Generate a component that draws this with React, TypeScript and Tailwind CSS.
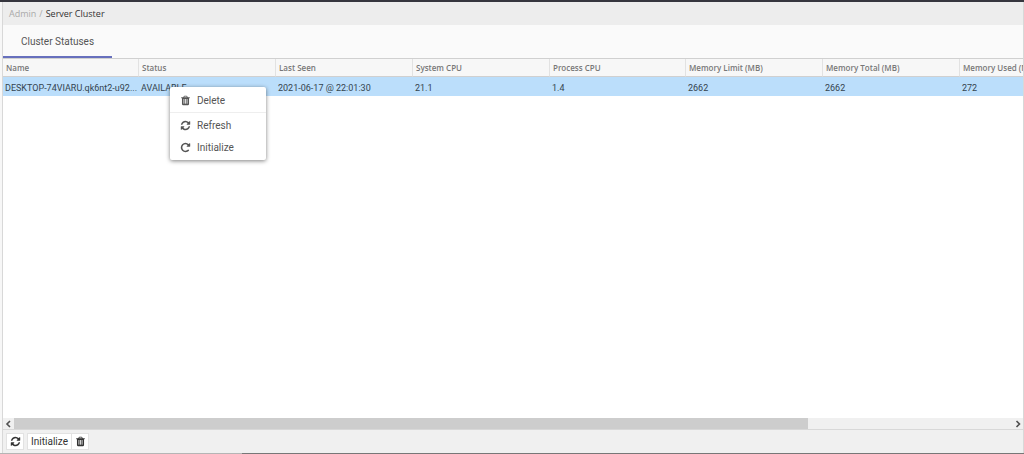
import React from "react";

const icons = {
  trash:
    "M704 1376v-704q0-14-9-23t-23-9h-64q-14 0-23 9t-9 23v704q0 14 9 23t23 9h64q14 0 23-9t9-23zm256 0v-704q0-14-9-23t-23-9h-64q-14 0-23 9t-9 23v704q0 14 9 23t23 9h64q14 0 23-9t9-23zm256 0v-704q0-14-9-23t-23-9h-64q-14 0-23 9t-9 23v704q0 14 9 23t23 9h64q14 0 23-9t9-23zm-544-992h448l-48-117q-7-9-17-11h-317q-10 2-17 11zm928 32v64q0 14-9 23t-23 9h-96v948q0 83-47 143.5t-113 60.5h-832q-66 0-113-58.5t-47-141.5v-952h-96q-14 0-23-9t-9-23v-64q0-14 9-23t23-9h309l70-167q15-37 54-63t79-26h320q40 0 79 26t54 63l70 167h309q14 0 23 9t9 23z",
  refresh:
    "M1639 1056q0 5-1 7-64 268-268 434.5t-478 166.5q-146 0-282.5-55t-243.5-157l-129 129q-19 19-45 19t-45-19-19-45v-448q0-26 19-45t45-19h448q26 0 45 19t19 45-19 45l-137 137q71 66 161 102t187 36q134 0 250-65t186-179q11-17 53-117 8-23 30-23h192q13 0 22.5 9.5t9.5 22.5zm25-800v448q0 26-19 45t-45 19h-448q-26 0-45-19t-19-45 19-45l138-138q-148-137-349-137-134 0-250 65t-186 179q-11 17-53 117-8 23-30 23h-199q-13 0-22.5-9.5t-9.5-22.5v-7q65-268 270-434.5t480-166.5q146 0 284 55.5t245 156.5l130-129q19-19 45-19t45 19 19 45z",
  repeat:
    "M1664 256v448q0 26-19 45t-45 19h-448q-42 0-59-40-17-39 14-69l138-138q-148-137-349-137-104 0-198.5 40.5t-163.5 109.5-109.5 163.5-40.5 198.5 40.5 198.5 109.5 163.5 163.5 109.5 198.5 40.5q119 0 225-52t179-147q7-10 23-12 15 0 25 9l137 138q9 8 9.5 20.5t-7.5 22.5q-109 132-264 204.5t-327 72.5q-156 0-298-61t-245-164-164-245-61-298 61-298 164-245 245-164 298-61q147 0 284.5 55.5t244.5 156.5l130-129q29-31 70-14 39 17 39 59z",
};

function Icon({ name }: { name: keyof typeof icons }) {
  return (
    <svg viewBox="0 0 1792 1792" className="size-[11px] shrink-0" fill="currentColor" aria-hidden="true">
      <path d={icons[name]} />
    </svg>
  );
}

const columns = [
  { label: "Name", value: "DESKTOP-74VIARU.qk6nt2-u92...", width: "w-[136px]" },
  { label: "Status", value: "AVAILABLE", width: "w-[137px]" },
  { label: "Last Seen", value: "2021-06-17 @ 22:01:30", width: "w-[137px]" },
  { label: "System CPU", value: "21.1", width: "w-[137px]" },
  { label: "Process CPU", value: "1.4", width: "w-[136px]" },
  { label: "Memory Limit (MB)", value: "2662", width: "w-[137px]" },
  { label: "Memory Total (MB)", value: "2662", width: "w-[137px]" },
  { label: "Memory Used (MB)", value: "272", width: "w-[137px]" },
];

function ClusterTable() {
  return (
    <table className="w-[1094px] table-fixed border-separate border-spacing-0 text-left">
      <thead>
        <tr className="h-[18px] bg-[#f7f7f7] font-['Open_Sans',sans-serif] text-[8px] leading-3 text-[#777]">
          {columns.map((c) => (
            <th key={c.label} scope="col" className={`${c.width} border-r border-b border-r-[#e2e2e2] border-b-[#d0d0d0] px-[3px] py-0 font-semibold whitespace-nowrap`}>
              {c.label}
            </th>
          ))}
        </tr>
      </thead>
      <tbody>
        <tr className="h-[19px] bg-[#bbdefb] font-[Roboto,sans-serif] text-[9px] leading-3 text-[#34444f]">
          {columns.map((c) => (
            <td key={c.label} className="px-0.5 pt-[3px] pb-0 whitespace-nowrap">
              {c.value}
            </td>
          ))}
        </tr>
      </tbody>
    </table>
  );
}

function ContextMenu() {
  const item = "flex h-[22px] w-full items-center gap-1.5 px-2.5 hover:bg-gray-100";
  return (
    <div role="menu" className="absolute top-[85px] left-[170px] w-24 rounded-xs bg-white py-0.5 font-[Roboto,sans-serif] text-[10px] text-[#555] shadow-[0_1px_4px_rgba(0,0,0,0.5)]">
      <button role="menuitem" className={item}>
        <Icon name="trash" />
        Delete
      </button>
      <hr className="my-px border-[#eee]" />
      <button role="menuitem" className={item}>
        <Icon name="refresh" />
        Refresh
      </button>
      <button role="menuitem" className={item}>
        <Icon name="repeat" />
        Initialize
      </button>
    </div>
  );
}

function Chevron({ d }: { d: string }) {
  return (
    <svg viewBox="0 0 8 8" className="size-2" fill="none" stroke="#505050" strokeWidth="1.6" aria-hidden="true">
      <path d={d} />
    </svg>
  );
}

function HorizontalScroll() {
  return (
    <div className="flex h-3 shrink-0 border-b border-[#d8d8d8] bg-[#f0f0f0]">
      <button aria-label="Scroll left" className="flex w-[11px] items-center justify-center">
        <Chevron d="M5 1 2 4l3 3" />
      </button>
      <div className="flex-1">
        <div className="h-full w-[79.6%] bg-[#cdcdcd]" />
      </div>
      <button aria-label="Scroll right" className="flex w-[11px] items-center justify-center">
        <Chevron d="M2.5 1l3 3-3 3" />
      </button>
    </div>
  );
}

function Toolbar() {
  const button = "flex h-[17px] items-center justify-center border border-[#e2e2e2] bg-white";
  return (
    <footer className="flex h-[23px] shrink-0 items-center bg-[#f0f0f0] px-[3px] font-[Roboto,sans-serif] text-[10px] text-[#333]">
      <button aria-label="Refresh" className={`${button} mr-[3px] w-[18px]`}>
        <Icon name="refresh" />
      </button>
      <button className={`${button} w-[45px]`}>Initialize</button>
      <button aria-label="Delete" className={`${button} w-[17px] border-l-0`}>
        <Icon name="trash" />
      </button>
    </footer>
  );
}

export default function App() {
  return (
    <div className="relative flex h-screen flex-col overflow-hidden border-t-2 border-[#36363e] bg-[#f7f7f7] pl-0.5">
      <main className="flex min-h-0 flex-1 flex-col border-x border-[#d8d8d8] bg-white">
        <nav aria-label="Breadcrumb" className="flex h-[23px] shrink-0 items-center gap-[3px] bg-[#ededed] px-1.5 font-['Open_Sans',sans-serif] text-[9px] text-[#aaa]">
          <a href="#admin">Admin</a>
          <span>/</span>
          <span className="text-[#333]">Server Cluster</span>
        </nav>
        <div role="tablist" className="flex h-[34px] shrink-0 border-b border-[#d0d0d0] bg-[#fafafa]">
          <button role="tab" aria-selected="true" className="w-[109px] border-b-2 border-[#6770bd] pt-0.5 font-[Roboto,sans-serif] text-[10px] text-[#555]">
            Cluster Statuses
          </button>
        </div>
        <div className="min-h-0 flex-1 overflow-hidden">
          <ClusterTable />
        </div>
        <HorizontalScroll />
        <Toolbar />
      </main>
      <div className="-ml-0.5 flex h-px shrink-0 bg-[#777]">
        <div className="w-[242px] bg-[#b5b5b5]" />
      </div>
      <ContextMenu />
    </div>
  );
}
